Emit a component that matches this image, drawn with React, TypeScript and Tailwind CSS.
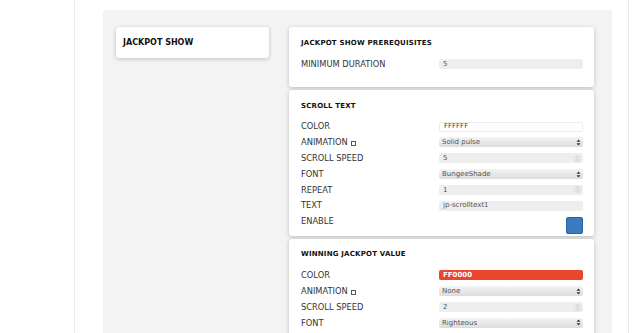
import React from "react";

const FONT = { fontFamily: "'DejaVu Sans', Verdana, sans-serif" };

type Kind = "text" | "select" | "number" | "color" | "red" | "check";

function Updown() {
  return (
    <svg width="5" height="7" viewBox="0 0 5 7" className="shrink-0">
      <path d="M2.5 0.5 L4.5 2.8 L0.5 2.8 Z" fill="#333" />
      <path d="M2.5 6.5 L4.5 4.2 L0.5 4.2 Z" fill="#333" />
    </svg>
  );
}

function Spinner() {
  return (
    <svg width="7" height="7" viewBox="0 0 7 7" className="shrink-0">
      <circle cx="3.5" cy="3.5" r="3" fill="#f4f4f4" stroke="#c8c8c8" strokeWidth="0.6" />
      <path d="M2.2 3 L3.5 1.8 L4.8 3" fill="none" stroke="#999" strokeWidth="0.6" />
      <path d="M2.2 4 L3.5 5.2 L4.8 4" fill="none" stroke="#999" strokeWidth="0.6" />
    </svg>
  );
}

function Field({ kind, value }: { kind: Kind; value?: string }) {
  if (kind === "check") {
    return (
      <div className="flex w-[144px] justify-end pt-[3px]">
        <div className="h-[17px] w-[17px] rounded-[2px] border border-[#2a63a0] bg-[#3a7bc0]" />
      </div>
    );
  }
  if (kind === "red") {
    return (
      <div className="flex h-[10px] w-[144px] items-center rounded-[2px] bg-[#ea452d] px-[4px] text-[7px] font-bold text-white">
        {value}
      </div>
    );
  }
  if (kind === "color") {
    return (
      <div className="flex h-[10px] w-[144px] items-center rounded-[2px] border border-[#ececec] bg-white px-[4px] text-[7px] text-[#444]">
        {value}
      </div>
    );
  }
  if (kind === "select") {
    return (
      <div className="flex h-[10px] w-[144px] items-center justify-between rounded-[2px] bg-gradient-to-b from-[#f4f4f4] to-[#dcdcdc] pl-[3px] pr-[2px] text-[7px] text-[#555]">
        <span>{value}</span>
        <Updown />
      </div>
    );
  }
  if (kind === "number") {
    return (
      <div className="flex h-[10px] w-[144px] items-center justify-between rounded-[2px] bg-[#eeeeee] pl-[4px] pr-[2px] text-[7px] text-[#555]">
        <span>{value}</span>
        <Spinner />
      </div>
    );
  }
  return (
    <div className="flex h-[10px] w-[144px] items-center rounded-[2px] bg-[#eeeeee] px-[4px] text-[7px] text-[#555]">
      {value}
    </div>
  );
}

function Row({ label, kind, value, box }: { label: string; kind: Kind; value?: string; box?: boolean }) {
  return (
    <div className={`flex ${kind === "check" ? "items-start" : "h-[15.8px] items-center"}`}>
      <div className="flex h-[15.8px] w-[138px] items-center text-[8.3px] text-[#333]">
        {label}
        {box && <span className="ml-[3px] mt-[2px] inline-block h-[5px] w-[5px] border border-[#555]" />}
      </div>
      <Field kind={kind} value={value} />
    </div>
  );
}

function Card({ title, children, className = "" }: { title: string; children: React.ReactNode; className?: string }) {
  return (
    <div className={`rounded-[3px] bg-white pl-[12px] pr-[11px] pt-[11px] shadow-[0_1px_4px_rgba(0,0,0,0.22)] ${className}`}>
      <div className="flex h-[10px] items-center text-[7px] font-bold tracking-[0.2px] text-[#111]">{title}</div>
      <div className="mt-[8px]">{children}</div>
    </div>
  );
}

export default function App() {
  return (
    <div className="h-[333px] w-[640px] overflow-hidden bg-white" style={FONT}>
      <div className="ml-[74px] h-full w-[555px] border-x border-[#ebebeb] pl-[28px] pt-[10px]">
        <div className="flex h-[400px] w-[509px] gap-[20px] rounded-[3px] bg-[#f3f3f3] pl-[13px] pt-[17px]">
          <div className="flex h-[31px] w-[153px] items-center rounded-[3px] bg-white pl-[7px] text-[8px] font-bold text-[#111] shadow-[0_1px_4px_rgba(0,0,0,0.22)]">
            JACKPOT SHOW
          </div>
          <div className="flex w-[305px] flex-col gap-[3px]">
            <Card title="JACKPOT SHOW PREREQUISITES" className="pb-[15px]">
              <Row label="MINIMUM DURATION" kind="text" value="5" />
            </Card>
            <Card title="SCROLL TEXT" className="pb-[2px]">
              <Row label="COLOR" kind="color" value="FFFFFF" />
              <Row label="ANIMATION" kind="select" value="Solid pulse" box />
              <Row label="SCROLL SPEED" kind="number" value="5" />
              <Row label="FONT" kind="select" value="BungeeShade" />
              <Row label="REPEAT" kind="number" value="1" />
              <Row label="TEXT" kind="text" value="jp-scrolltext1" />
              <Row label="ENABLE" kind="check" />
            </Card>
            <Card title="WINNING JACKPOT VALUE" className="pb-[15px]">
              <Row label="COLOR" kind="red" value="FF0000" />
              <Row label="ANIMATION" kind="select" value="None" box />
              <Row label="SCROLL SPEED" kind="number" value="2" />
              <Row label="FONT" kind="select" value="Righteous" />
              <Row label="REPEAT" kind="number" value="1" />
            </Card>
          </div>
        </div>
      </div>
    </div>
  );
}
